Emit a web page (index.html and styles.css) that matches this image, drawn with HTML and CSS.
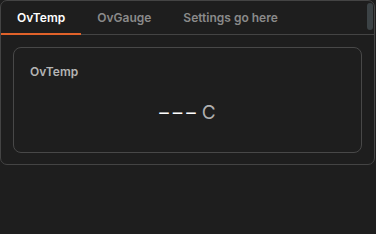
FILE: index.html
```html
<!DOCTYPE html>
<html lang="en">
<head>
    <meta charset="UTF-8">
    <meta name="viewport" content="width=device-width, initial-scale=1.0">
    <title>OvTemp</title>
    <link rel="stylesheet" href="styles.css">
</head>
<body>
    <div class="panel">
        <div class="tabs">
            <div class="tab active">OvTemp</div>
            <div class="tab">OvGauge</div>
            <div class="tab">Settings go here</div>
            <div class="scroll-thumb"></div>
        </div>

        <div class="tab-body">
            <div class="card">
                <div class="card-title">OvTemp</div>
                <div class="reading">
                    <span class="dashes">&ndash;&ndash;&ndash;</span><span class="unit">C</span>
                </div>
            </div>
        </div>
    </div>
</body>
</html>
```

FILE: styles.css
```css
* {
    margin: 0;
    padding: 0;
    box-sizing: border-box;
}

body {
    background-color: #1e1e1e;
    color: #f5f5f5;
    font-family: 'Inter', 'Liberation Sans', sans-serif;
    width: 376px;
    height: 234px;
    overflow: hidden;
}

.panel {
    width: 375px;
    height: 165px;
    border: 1px solid #444444;
    border-radius: 7px;
    position: relative;
}

.tabs {
    display: flex;
    height: 34px;
    border-bottom: 1px solid #444444;
}

.tab {
    padding: 0 16px;
    height: 33px;
    line-height: 33px;
    font-size: 12px;
    font-weight: 600;
    color: #8a8a8a;
}

.tab.active {
    color: #ffffff;
    border-bottom: 2px solid #e0622a;
    height: 34px;
}

.scroll-thumb {
    position: absolute;
    top: 2px;
    right: 1px;
    width: 6px;
    height: 27px;
    border-radius: 3px;
    background-color: #3c4346;
}

.tab-body {
    padding: 12px 12px 0 12px;
}

.card {
    height: 106px;
    border: 1px solid #484848;
    border-radius: 8px;
    padding: 16px 16px;
}

.card-title {
    font-size: 12px;
    font-weight: 600;
    color: #b4b4b4;
    line-height: 16px;
}

.reading {
    text-align: center;
    margin-top: 21px;
    font-size: 19px;
    line-height: 24px;
}

.dashes {
    color: #ffffff;
    letter-spacing: 4px;
}

.unit {
    color: #b0b0b0;
    margin-left: 2px;
}
```
